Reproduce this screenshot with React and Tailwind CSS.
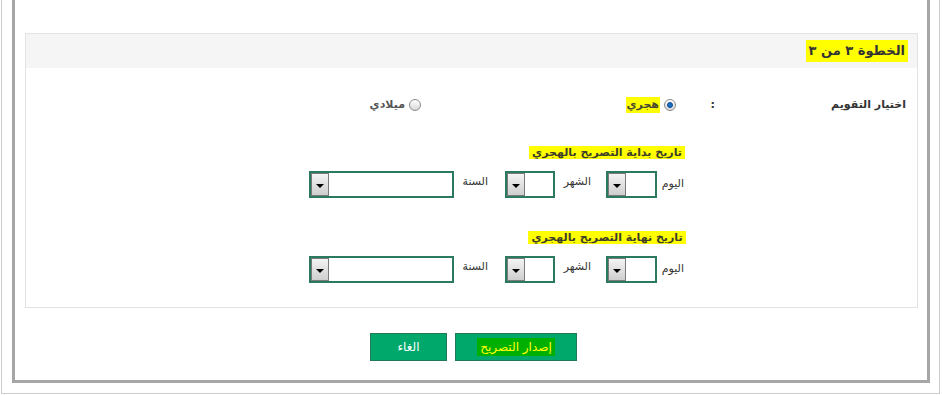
import React from "react";

function Radio({ checked }) {
  return (
    <span className="inline-flex h-[12px] w-[12px] items-center justify-center rounded-full border border-[#8a8a8a] bg-gradient-to-b from-[#ffffff] to-[#d8d8d8]">
      {checked && (
        <span className="h-[6px] w-[6px] rounded-full bg-[#1a6fc4] border border-[#0d4a8a]" />
      )}
    </span>
  );
}

function Select({ width }) {
  return (
    <div
      className="flex h-[27px] border-2 border-[#2b7a5d] bg-white"
      style={{ width }}
    >
      <div className="flex-1" />
      <div className="flex h-full w-[18px] items-center justify-center border border-[#7a7a7a] bg-gradient-to-b from-[#f4f4f4] to-[#cfcfcf]">
        <span className="mt-[2px] h-0 w-0 border-x-[4px] border-t-[4px] border-x-transparent border-t-black" />
      </div>
    </div>
  );
}

function DateRow() {
  return (
    <div className="mr-[233px] flex items-start">
      <span className="w-[26px] whitespace-nowrap pt-[5px] text-[11px] text-[#333]">اليوم</span>
      <div className="mr-[1px]">
        <Select width={51} />
      </div>
      <span className="w-[51px] whitespace-nowrap pr-[15px] pt-[3px] text-[11px] text-[#333]">الشهر</span>
      <Select width={50} />
      <span className="w-[51px] whitespace-nowrap pr-[17px] pt-[3px] text-[11px] text-[#333]">السنة</span>
      <Select width={145} />
    </div>
  );
}

function DateSection({ title }) {
  return (
    <div className="flex flex-col">
      <div className="mr-[210px] w-[200px] text-center">
        <span className="bg-[#ffff00] px-[3px] text-[11px] font-bold text-[#3d3d2a]">
          {title}
        </span>
      </div>
      <div className="mt-[8px]">
        <DateRow />
      </div>
    </div>
  );
}

export default function App() {
  return (
    <div
      dir="rtl"
      className="h-[395px] w-[942px] overflow-hidden bg-white"
      style={{ fontFamily: '"DejaVu Sans", Tahoma, sans-serif' }}
    >
      <div className="mr-[2px] h-[394px] w-[939px] border-x border-b border-[#cccccc] pr-[9px] pl-[10px] pb-[10px]">
        <div className="h-full border-x-[3px] border-b-[3px] border-[#a6a6a6] pt-[33px] pr-[9px] pl-[10px]">
          <div className="border border-[#e3e3e3]">
            <div className="flex h-[34px] items-center bg-[#f5f5f5] pr-[9px]">
              <span className="bg-[#ffff00] px-[3px] py-[1px] text-[13px] font-bold text-[#333]">
                الخطوة ٣ من ٣
              </span>
            </div>
            <div className="flex flex-col pt-[29px] pb-[24px]">
              <div className="flex h-[16px] items-center text-[11px] font-bold text-[#333]">
                <span className="mr-[11px] w-[191px] whitespace-nowrap">اختيار التقويم</span>
                <span className="w-[30px]">:</span>
                <span className="mr-[9px] flex w-[255px] items-center gap-[4px]">
                  <Radio checked />
                  <span className="bg-[#ffff00] px-[1px] text-[#4a4a30]">هجري</span>
                </span>
                <span className="flex items-center gap-[4px]">
                  <Radio />
                  <span className="text-[#555]">ميلادي</span>
                </span>
              </div>
              <div className="mt-[26px]">
                <DateSection title="تاريخ بداية التصريح بالهجري" />
              </div>
              <div className="mt-[26px]">
                <DateSection title="تاريخ نهاية التصريح بالهجري" />
              </div>
            </div>
          </div>
          <div className="mt-[25px] flex justify-center gap-[8px] pl-[4px]">
            <button className="flex h-[28px] w-[122px] items-center justify-center border border-[#23785a] bg-[#00a96b] text-[12px]">
              <span className="bg-[#00b000] px-[3px] text-[#ffff00]">إصدار التصريح</span>
            </button>
            <button className="flex h-[28px] w-[77px] items-center justify-center border border-[#23785a] bg-[#00a96b] text-[12px] text-white">
              الغاء
            </button>
          </div>
        </div>
      </div>
    </div>
  );
}
